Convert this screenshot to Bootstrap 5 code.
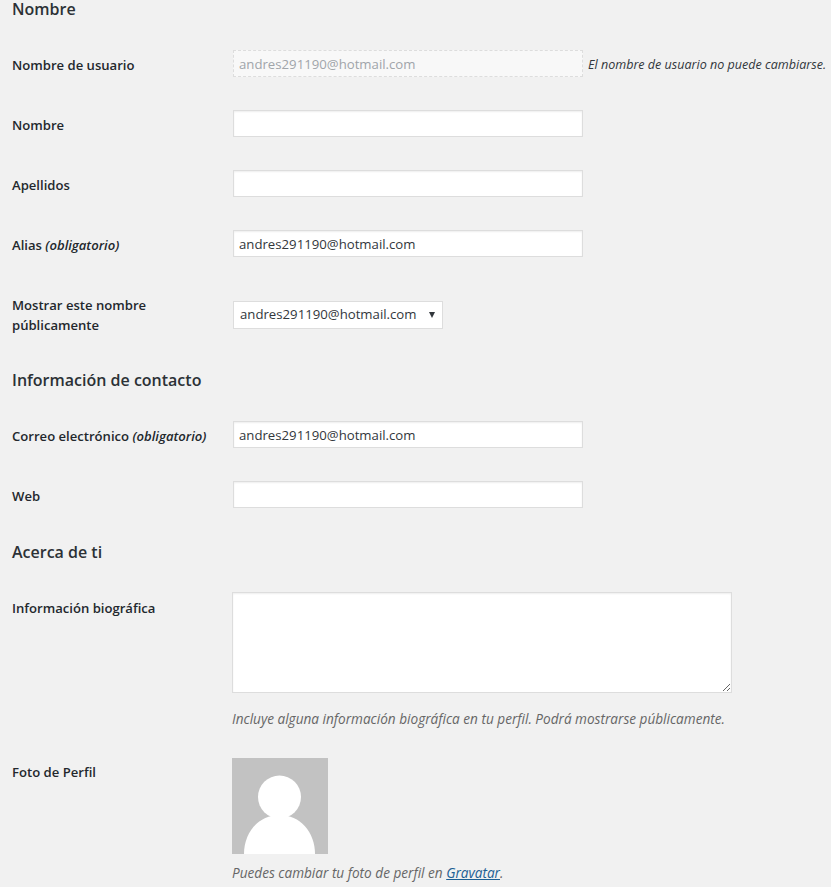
<!DOCTYPE html>
<html lang="es">
<head>
<meta charset="utf-8">
<title>Perfil</title>
<link href="https://cdn.jsdelivr.net/npm/bootstrap@5.3.0/dist/css/bootstrap.min.css" rel="stylesheet">
<style>
html,body{height:887px;overflow:hidden}
body{background:#f1f1f1;color:#32373c;font-family:"Open Sans","Noto Sans",sans-serif;font-size:13.5px}
.wp-page{padding-left:12px;height:887px;overflow:hidden}
.wp-title{font-size:16px;line-height:20px;font-weight:600;color:#2c3136;margin:0}
.t-name{line-height:18px}
.wp-row{display:flex;align-items:center}
.wp-label{width:221px;flex:none;font-size:13.1px;line-height:20px;font-weight:600;color:#23282d;padding-top:2px}
.wp-label em{font-weight:600}
.wp-input.form-control{width:350px;height:27px;padding:0 5px;border:1px solid #ddd;border-radius:0;font-size:13.2px;color:#32373c;background:#fff;box-shadow:inset 0 1px 2px rgba(0,0,0,.07)}
.wp-input.form-control:disabled{background:#f8f8f8;color:#a0a5aa;border:1px dashed #ddd;box-shadow:none}
.wp-select.form-select{width:210px;height:28px;padding:0 6px;border:1px solid #ddd;border-radius:0;font-size:13.2px;color:#32373c;background-color:#fff;background-position:right 7px top 10px;background-size:6px 6px;background-image:url("data:image/svg+xml,%3Csvg xmlns='http://www.w3.org/2000/svg' viewBox='0 0 8 8'%3E%3Cpath d='M0 0h8L4 8z' fill='%2332373c'/%3E%3C/svg%3E")}
.wp-bio.form-control{width:500px;height:101px;margin-left:-1px;border:1px solid #ddd;border-radius:0;resize:both;min-height:0;box-shadow:inset 0 1px 2px rgba(0,0,0,.07)}
.wp-note{font-size:13.6px;font-style:italic;color:#666;line-height:18px}
.wp-inline{font-size:12.55px;font-style:italic;color:#32373c;margin:3px 0 0 5px;white-space:nowrap}
.wp-avatar{display:block;width:96px;height:96px;margin-left:-1px}
.wp-note a{color:#1d5f94}
.r-user{margin-top:32px}.r-gap{margin-top:33px}
.r-display{margin-top:33px;height:49px}
.r-display .wp-label{padding-top:0}
.t-contact{margin-top:31px}
.r-mail{margin-top:31px}
.t-about{margin-top:34px}
.r-bio{margin-top:30px;align-items:flex-start}
.r-bio .wp-label{padding-top:6px}
.n-bio{margin:17px 0 0 -1px}
.r-photo{margin-top:30px;align-items:flex-start}
.r-photo .wp-label{padding-top:4px}
.n-photo{margin:10px 0 0 -1px}
</style>
</head>
<body>
<main class="wp-page">
  <h2 class="wp-title t-name">Nombre</h2>
  <div class="wp-row r-user"><label class="wp-label">Nombre de usuario</label><input class="wp-input form-control" disabled value="andres291190@hotmail.com"><span class="wp-inline">El nombre de usuario no puede cambiarse.</span></div>
  <div class="wp-row r-gap"><label class="wp-label">Nombre</label><input class="wp-input form-control"></div>
  <div class="wp-row r-gap"><label class="wp-label">Apellidos</label><input class="wp-input form-control"></div>
  <div class="wp-row r-gap"><label class="wp-label">Alias <em>(obligatorio)</em></label><input class="wp-input form-control" value="andres291190@hotmail.com"></div>
  <div class="wp-row r-display"><label class="wp-label">Mostrar este nombre<br>públicamente</label><select class="wp-select form-select"><option>andres291190@hotmail.com</option></select></div>
  <h2 class="wp-title t-contact">Información de contacto</h2>
  <div class="wp-row r-mail"><label class="wp-label">Correo electrónico <em>(obligatorio)</em></label><input class="wp-input form-control" value="andres291190@hotmail.com"></div>
  <div class="wp-row r-gap"><label class="wp-label">Web</label><input class="wp-input form-control"></div>
  <h2 class="wp-title t-about">Acerca de ti</h2>
  <div class="wp-row r-bio"><label class="wp-label">Información biográfica</label><div><textarea class="wp-bio form-control"></textarea><p class="wp-note n-bio">Incluye alguna información biográfica en tu perfil. Podrá mostrarse públicamente.</p></div></div>
  <div class="wp-row r-photo"><label class="wp-label">Foto de Perfil</label><div>
    <svg class="wp-avatar" viewBox="0 0 96 96" role="img" aria-label="Foto de perfil"><rect width="96" height="96" fill="#c2c2c2"/><circle cx="47.5" cy="39" r="21.5" fill="#fff"/><path d="M12 96C12 74 27 57 47.5 57S83 74 83 96Z" fill="#fff"/></svg>
    <p class="wp-note n-photo">Puedes cambiar tu foto de perfil en <a href="#">Gravatar</a>.</p></div></div>
</main>
<script src="https://cdn.jsdelivr.net/npm/bootstrap@5.3.0/dist/js/bootstrap.bundle.min.js"></script>
</body>
</html>
